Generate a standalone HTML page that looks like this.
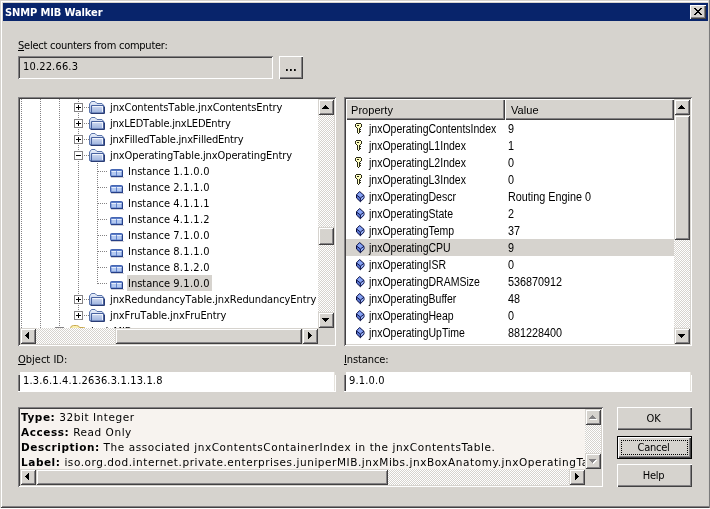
<!DOCTYPE html><html><head><meta charset="utf-8"><title>SNMP MIB Walker</title><style>
*{box-sizing:border-box;margin:0;padding:0}
html,body{width:710px;height:509px;overflow:hidden;background:#fff}
body{position:relative;font-family:"DejaVu Sans Condensed","Liberation Sans",sans-serif;font-size:11px;color:#000;line-height:13px}
.abs{position:absolute}
#win{will-change:transform;position:absolute;left:0;top:0;width:710px;height:508px;background:#d6d3ce;
 box-shadow:inset 1px 1px 0 #d6d3ce,inset -1px -1px 0 #424142,inset 2px 2px 0 #fff,inset -2px -2px 0 #848284}
#title{position:absolute;left:3px;top:3px;width:705px;height:18px;background:#08246b;color:#fff;font-weight:bold}
#title span{position:absolute;left:2px;top:3px;white-space:nowrap;letter-spacing:-0.1px}
.btn{position:absolute;background:#d6d3ce;
 box-shadow:inset 1px 1px 0 #fff,inset -1px -1px 0 #424142,inset -2px -2px 0 #848284;text-align:center}
.sunk{position:absolute;box-shadow:inset 1px 1px 0 #848284,inset -1px -1px 0 #fff,inset 2px 2px 0 #424142,inset -2px -2px 0 #d6d3ce}
.t{position:absolute;white-space:nowrap}
.tah{letter-spacing:-0.25px}
.track{position:absolute;background:conic-gradient(#fff 25%,#d6d3ce 0 50%,#fff 0 75%,#d6d3ce 0) 0 0/2px 2px}
.sb{position:absolute;background:#d6d3ce;box-shadow:inset 1px 1px 0 #d6d3ce,inset -1px -1px 0 #424142,inset 2px 2px 0 #fff,inset -2px -2px 0 #848284}
.sb svg{position:absolute;left:0;top:0}
.ms{font-family:"Liberation Sans",sans-serif;font-size:12.5px;line-height:14px;transform:scaleX(.84);transform-origin:0 0}
.hd{font-family:"Liberation Sans",sans-serif;font-size:11px;letter-spacing:.05px}
.tr{font-kerning:none;letter-spacing:-.1px}
.dg{letter-spacing:.16px}
.tr .dg{letter-spacing:.3px}
.ver{font-family:"DejaVu Sans","Liberation Sans",sans-serif;font-size:10.5px;letter-spacing:.55px}
.dotv{position:absolute;width:1px;background:repeating-linear-gradient(to bottom,#848284 0 1px,transparent 1px 2px)}
.doth{position:absolute;height:1px;background:repeating-linear-gradient(to right,#848284 0 1px,transparent 1px 2px)}
.box{position:absolute;width:9px;height:9px;border:1px solid #848284;background:#fff}
.box i{position:absolute;left:1px;top:3px;width:5px;height:1px;background:#000}
.box b{position:absolute;left:3px;top:1px;width:1px;height:5px;background:#000}
</style></head><body>
<svg width="0" height="0" style="position:absolute"><defs><linearGradient id="fg" x1="0" y1="0" x2="0" y2="1"><stop offset="0" stop-color="#d3ddf2"/><stop offset="1" stop-color="#9cb2de"/></linearGradient><linearGradient id="fb" x1="0" y1="0" x2="0" y2="1"><stop offset="0" stop-color="#eef3fb"/><stop offset="1" stop-color="#9cb3e2"/></linearGradient></defs></svg>
<div id="win">
<div class="abs" style="left:708px;top:0;width:1px;height:506px;background:#d2cfca"></div><div class="abs" style="left:709px;top:0;width:1px;height:508px;background:#7c7c7c"></div>
<div id="title"><span>SNMP MIB Walker</span></div>
<div class="btn" style="left:690px;top:5px;width:16px;height:14px"><svg class="abs" style="left:4px;top:3px" width="8" height="7" viewBox="0 0 8 7" shape-rendering="crispEdges"><path d="M0 0h2v1h1v1h2v-1h1v-1h2v1h-1v1h-1v1h-1v1h1v1h1v1h1v1h-2v-1h-1v-1h-2v1h-1v1h-2v-1h1v-1h1v-1h1v-1h-1v-1h-1v-1h-1z" fill="#000"/></svg></div>
<div class="t tah" style="left:18px;top:39px"><u>S</u>elect counters from computer:</div>
<div class="sunk" style="left:18px;top:56px;width:255px;height:23px"></div>
<div class="t dg" style="left:23px;top:60px">10.22.66.3</div>
<div class="btn" style="left:279px;top:56px;width:24px;height:23px"><span class="t" style="left:6px;top:5px;font-weight:bold;letter-spacing:.3px">...</span></div>
<div class="sunk" style="left:18px;top:97px;width:318px;height:249px;background:#fff"></div>
<div class="abs" style="left:20px;top:99px;width:298px;height:229px;overflow:hidden;background:#fff">
<div class="dotv" style="left:1px;top:0;height:230px"></div>
<div class="dotv" style="left:20px;top:0;height:230px"></div>
<div class="dotv" style="left:39px;top:0;height:230px"></div>
<div class="dotv" style="left:58px;top:0;height:216px"></div>
<div class="dotv" style="left:77px;top:64px;height:121px"></div>
<div class="doth" style="left:64px;top:8px;width:5px"></div>
<div class="box" style="left:54px;top:4px"><i></i><b></b></div>
<svg class="abs" style="left:69px;top:2px" width="16" height="13" viewBox="0 0 16 13"><path d="M.5 11.500v-8.500l2-2.500h3.500l2 2h5l2.500 3v6z" fill="url(#fb)" stroke="#5a74aa"/><path d="M2.500 4.500h12v7.500h-12z" fill="url(#fg)" stroke="#48629f"/><path d="M3.500 5.500h10v5.500" stroke="#fff" stroke-opacity=".75" fill="none"/><path d="M1.500 12.500h14v-6.500" stroke="#2a3c74" fill="none"/></svg>
<div class="t tr" style="left:90px;top:2px;letter-spacing:-0.1px">jnxContentsTable.jnxContentsEntry</div>
<div class="doth" style="left:64px;top:24px;width:5px"></div>
<div class="box" style="left:54px;top:20px"><i></i><b></b></div>
<svg class="abs" style="left:69px;top:18px" width="16" height="13" viewBox="0 0 16 13"><path d="M.5 11.500v-8.500l2-2.500h3.500l2 2h5l2.500 3v6z" fill="url(#fb)" stroke="#5a74aa"/><path d="M2.500 4.500h12v7.500h-12z" fill="url(#fg)" stroke="#48629f"/><path d="M3.500 5.500h10v5.500" stroke="#fff" stroke-opacity=".75" fill="none"/><path d="M1.500 12.500h14v-6.500" stroke="#2a3c74" fill="none"/></svg>
<div class="t tr" style="left:90px;top:18px;letter-spacing:-0.2px">jnxLEDTable.jnxLEDEntry</div>
<div class="doth" style="left:64px;top:40px;width:5px"></div>
<div class="box" style="left:54px;top:36px"><i></i><b></b></div>
<svg class="abs" style="left:69px;top:34px" width="16" height="13" viewBox="0 0 16 13"><path d="M.5 11.500v-8.500l2-2.500h3.500l2 2h5l2.500 3v6z" fill="url(#fb)" stroke="#5a74aa"/><path d="M2.500 4.500h12v7.500h-12z" fill="url(#fg)" stroke="#48629f"/><path d="M3.500 5.500h10v5.500" stroke="#fff" stroke-opacity=".75" fill="none"/><path d="M1.500 12.500h14v-6.500" stroke="#2a3c74" fill="none"/></svg>
<div class="t tr" style="left:90px;top:34px;letter-spacing:-0.2px">jnxFilledTable.jnxFilledEntry</div>
<div class="doth" style="left:64px;top:56px;width:5px"></div>
<div class="box" style="left:54px;top:52px"><i></i></div>
<svg class="abs" style="left:69px;top:50px" width="16" height="13" viewBox="0 0 16 13"><path d="M.5 11.500v-8.500l2-2.500h3.500l2 2h5l2.500 3v6z" fill="url(#fb)" stroke="#5a74aa"/><path d="M2.500 4.500h12v7.500h-12z" fill="url(#fg)" stroke="#48629f"/><path d="M3.500 5.500h10v5.500" stroke="#fff" stroke-opacity=".75" fill="none"/><path d="M1.500 12.500h14v-6.500" stroke="#2a3c74" fill="none"/></svg>
<div class="t tr" style="left:90px;top:50px;letter-spacing:-0.1px">jnxOperatingTable.jnxOperatingEntry</div>
<div class="doth" style="left:78px;top:72px;width:10px"></div>
<svg class="abs" style="left:90px;top:70px" width="14" height="9" viewBox="0 0 14 9"><rect x=".5" y=".5" width="12" height="7" rx="1" fill="#5a7cc8" stroke="#4666b2"/><path d="M1 7.500h12M12.500 1.500v6" stroke="#263f86" fill="none"/><rect x="1.500" y="2" width="4.600" height="4.500" fill="#b4c9f0"/><rect x="6.900" y="2" width="4.600" height="4.500" fill="#b4c9f0"/><rect x="1.500" y="2" width="10" height="1" fill="#e6eefc"/><rect x="6.100" y="2" width=".8" height="4.500" fill="#5d80cc"/><rect x="1" y="8" width="13" height="1" fill="#d0d0d8"/></svg>
<div class="t tr" style="left:108px;top:66px;letter-spacing:0">Instance <span class="dg">1.1.0.0</span></div>
<div class="doth" style="left:78px;top:88px;width:10px"></div>
<svg class="abs" style="left:90px;top:86px" width="14" height="9" viewBox="0 0 14 9"><rect x=".5" y=".5" width="12" height="7" rx="1" fill="#5a7cc8" stroke="#4666b2"/><path d="M1 7.500h12M12.500 1.500v6" stroke="#263f86" fill="none"/><rect x="1.500" y="2" width="4.600" height="4.500" fill="#b4c9f0"/><rect x="6.900" y="2" width="4.600" height="4.500" fill="#b4c9f0"/><rect x="1.500" y="2" width="10" height="1" fill="#e6eefc"/><rect x="6.100" y="2" width=".8" height="4.500" fill="#5d80cc"/><rect x="1" y="8" width="13" height="1" fill="#d0d0d8"/></svg>
<div class="t tr" style="left:108px;top:82px;letter-spacing:0">Instance <span class="dg">2.1.1.0</span></div>
<div class="doth" style="left:78px;top:104px;width:10px"></div>
<svg class="abs" style="left:90px;top:102px" width="14" height="9" viewBox="0 0 14 9"><rect x=".5" y=".5" width="12" height="7" rx="1" fill="#5a7cc8" stroke="#4666b2"/><path d="M1 7.500h12M12.500 1.500v6" stroke="#263f86" fill="none"/><rect x="1.500" y="2" width="4.600" height="4.500" fill="#b4c9f0"/><rect x="6.900" y="2" width="4.600" height="4.500" fill="#b4c9f0"/><rect x="1.500" y="2" width="10" height="1" fill="#e6eefc"/><rect x="6.100" y="2" width=".8" height="4.500" fill="#5d80cc"/><rect x="1" y="8" width="13" height="1" fill="#d0d0d8"/></svg>
<div class="t tr" style="left:108px;top:98px;letter-spacing:0">Instance <span class="dg">4.1.1.1</span></div>
<div class="doth" style="left:78px;top:120px;width:10px"></div>
<svg class="abs" style="left:90px;top:118px" width="14" height="9" viewBox="0 0 14 9"><rect x=".5" y=".5" width="12" height="7" rx="1" fill="#5a7cc8" stroke="#4666b2"/><path d="M1 7.500h12M12.500 1.500v6" stroke="#263f86" fill="none"/><rect x="1.500" y="2" width="4.600" height="4.500" fill="#b4c9f0"/><rect x="6.900" y="2" width="4.600" height="4.500" fill="#b4c9f0"/><rect x="1.500" y="2" width="10" height="1" fill="#e6eefc"/><rect x="6.100" y="2" width=".8" height="4.500" fill="#5d80cc"/><rect x="1" y="8" width="13" height="1" fill="#d0d0d8"/></svg>
<div class="t tr" style="left:108px;top:114px;letter-spacing:0">Instance <span class="dg">4.1.1.2</span></div>
<div class="doth" style="left:78px;top:136px;width:10px"></div>
<svg class="abs" style="left:90px;top:134px" width="14" height="9" viewBox="0 0 14 9"><rect x=".5" y=".5" width="12" height="7" rx="1" fill="#5a7cc8" stroke="#4666b2"/><path d="M1 7.500h12M12.500 1.500v6" stroke="#263f86" fill="none"/><rect x="1.500" y="2" width="4.600" height="4.500" fill="#b4c9f0"/><rect x="6.900" y="2" width="4.600" height="4.500" fill="#b4c9f0"/><rect x="1.500" y="2" width="10" height="1" fill="#e6eefc"/><rect x="6.100" y="2" width=".8" height="4.500" fill="#5d80cc"/><rect x="1" y="8" width="13" height="1" fill="#d0d0d8"/></svg>
<div class="t tr" style="left:108px;top:130px;letter-spacing:0">Instance <span class="dg">7.1.0.0</span></div>
<div class="doth" style="left:78px;top:152px;width:10px"></div>
<svg class="abs" style="left:90px;top:150px" width="14" height="9" viewBox="0 0 14 9"><rect x=".5" y=".5" width="12" height="7" rx="1" fill="#5a7cc8" stroke="#4666b2"/><path d="M1 7.500h12M12.500 1.500v6" stroke="#263f86" fill="none"/><rect x="1.500" y="2" width="4.600" height="4.500" fill="#b4c9f0"/><rect x="6.900" y="2" width="4.600" height="4.500" fill="#b4c9f0"/><rect x="1.500" y="2" width="10" height="1" fill="#e6eefc"/><rect x="6.100" y="2" width=".8" height="4.500" fill="#5d80cc"/><rect x="1" y="8" width="13" height="1" fill="#d0d0d8"/></svg>
<div class="t tr" style="left:108px;top:146px;letter-spacing:0">Instance <span class="dg">8.1.1.0</span></div>
<div class="doth" style="left:78px;top:168px;width:10px"></div>
<svg class="abs" style="left:90px;top:166px" width="14" height="9" viewBox="0 0 14 9"><rect x=".5" y=".5" width="12" height="7" rx="1" fill="#5a7cc8" stroke="#4666b2"/><path d="M1 7.500h12M12.500 1.500v6" stroke="#263f86" fill="none"/><rect x="1.500" y="2" width="4.600" height="4.500" fill="#b4c9f0"/><rect x="6.900" y="2" width="4.600" height="4.500" fill="#b4c9f0"/><rect x="1.500" y="2" width="10" height="1" fill="#e6eefc"/><rect x="6.100" y="2" width=".8" height="4.500" fill="#5d80cc"/><rect x="1" y="8" width="13" height="1" fill="#d0d0d8"/></svg>
<div class="t tr" style="left:108px;top:162px;letter-spacing:0">Instance <span class="dg">8.1.2.0</span></div>
<div class="doth" style="left:78px;top:184px;width:10px"></div>
<svg class="abs" style="left:90px;top:182px" width="14" height="9" viewBox="0 0 14 9"><rect x=".5" y=".5" width="12" height="7" rx="1" fill="#5a7cc8" stroke="#4666b2"/><path d="M1 7.500h12M12.500 1.500v6" stroke="#263f86" fill="none"/><rect x="1.500" y="2" width="4.600" height="4.500" fill="#b4c9f0"/><rect x="6.900" y="2" width="4.600" height="4.500" fill="#b4c9f0"/><rect x="1.500" y="2" width="10" height="1" fill="#e6eefc"/><rect x="6.100" y="2" width=".8" height="4.500" fill="#5d80cc"/><rect x="1" y="8" width="13" height="1" fill="#d0d0d8"/></svg>
<div class="abs" style="left:107px;top:176px;width:85px;height:16px;background:#d6d3ce"></div>
<div class="t tr" style="left:108px;top:178px;letter-spacing:0">Instance <span class="dg">9.1.0.0</span></div>
<div class="doth" style="left:64px;top:200px;width:5px"></div>
<div class="box" style="left:54px;top:196px"><i></i><b></b></div>
<svg class="abs" style="left:69px;top:194px" width="16" height="13" viewBox="0 0 16 13"><path d="M.5 11.500v-8.500l2-2.500h3.500l2 2h5l2.500 3v6z" fill="url(#fb)" stroke="#5a74aa"/><path d="M2.500 4.500h12v7.500h-12z" fill="url(#fg)" stroke="#48629f"/><path d="M3.500 5.500h10v5.500" stroke="#fff" stroke-opacity=".75" fill="none"/><path d="M1.500 12.500h14v-6.500" stroke="#2a3c74" fill="none"/></svg>
<div class="t tr" style="left:90px;top:194px;letter-spacing:-0.1px">jnxRedundancyTable.jnxRedundancyEntry</div>
<div class="doth" style="left:64px;top:216px;width:5px"></div>
<div class="box" style="left:54px;top:212px"><i></i><b></b></div>
<svg class="abs" style="left:69px;top:210px" width="16" height="13" viewBox="0 0 16 13"><path d="M.5 11.500v-8.500l2-2.500h3.500l2 2h5l2.500 3v6z" fill="url(#fb)" stroke="#5a74aa"/><path d="M2.500 4.500h12v7.500h-12z" fill="url(#fg)" stroke="#48629f"/><path d="M3.500 5.500h10v5.500" stroke="#fff" stroke-opacity=".75" fill="none"/><path d="M1.500 12.500h14v-6.500" stroke="#2a3c74" fill="none"/></svg>
<div class="t tr" style="left:90px;top:210px;letter-spacing:-0.1px">jnxFruTable.jnxFruEntry</div>
<div class="abs" style="left:35px;top:228px;width:9px;height:9px;border:1px solid #848284;background:#fff"></div>
<div class="doth" style="left:45px;top:232px;width:5px"></div>
<svg class="abs" style="left:50px;top:226px" width="16" height="13" viewBox="0 0 16 13"><path d="M.5 11.500v-8q0-3 3-3h3q2.500 0 3 2h4q2 0 2 2v7z" fill="#fbf0b0" stroke="#c8a850"/><path d="M1.500 4.500h13v7.500h-13z" fill="#f5dc80" stroke="#b89030"/></svg>
<div class="t tr" style="left:71px;top:226px">jnxJsMIBs</div>
</div>
<div class="track" style="left:318px;top:99px;width:16px;height:229px"></div>
<div class="sb" style="left:318px;top:99px;width:16px;height:16px"><svg width="16" height="16" viewBox="0 0 16 16" shape-rendering="crispEdges"><path d="M7 6h1v1h1v1h1v1h1v1H4v-1h1v-1h1v-1h1z" fill="#000"/></svg></div>
<div class="sb" style="left:318px;top:227px;width:16px;height:18px"></div>
<div class="sb" style="left:318px;top:312px;width:16px;height:16px"><svg width="16" height="16" viewBox="0 0 16 16" shape-rendering="crispEdges"><path d="M4 6h7v1h-1v1h-1v1h-1v1h-1v-1h-1v-1h-1v-1h-1z" fill="#000"/></svg></div>
<div class="track" style="left:20px;top:328px;width:298px;height:16px"></div>
<div class="sb" style="left:20px;top:328px;width:16px;height:16px"><svg width="16" height="16" viewBox="0 0 16 16" shape-rendering="crispEdges"><path d="M9 4v7h-1v-1h-1v-1h-1v-1h-1v-1h1v-1h1v-1h1v-1z" fill="#000"/></svg></div>
<div class="sb" style="left:115px;top:328px;width:187px;height:16px"></div>
<div class="sb" style="left:302px;top:328px;width:16px;height:16px"><svg width="16" height="16" viewBox="0 0 16 16" shape-rendering="crispEdges"><path d="M6 4v7h1v-1h1v-1h1v-1h1v-1h-1v-1h-1v-1h-1v-1z" fill="#000"/></svg></div>
<div class="abs" style="left:318px;top:328px;width:16px;height:16px;background:#d6d3ce"></div>
<div class="sunk" style="left:344px;top:97px;width:348px;height:249px;background:#fff"></div>
<div class="abs" style="left:346px;top:99px;width:328px;height:245px;overflow:hidden;background:#fff">
<div class="btn" style="left:0;top:0;width:159px;height:21px"><span class="t hd" style="left:5px;top:5px">Property</span></div>
<div class="btn" style="left:159px;top:0;width:169px;height:21px"><span class="t hd" style="left:6px;top:5px">Value</span></div>
<svg class="abs" style="left:9px;top:24px" width="7" height="11" viewBox="0 0 7 11" shape-rendering="crispEdges"><path d="M1 0h5v1h-5zM0 1h1v1h-1zM6 1h1v1h-1zM0 2h1v1h-1zM2 2h2v1h-2zM6 2h1v1h-1zM0 3h1v1h-1zM6 3h1v1h-1zM1 4h1v1h-1zM5 4h1v1h-1zM2 5h1v1h-1zM4 5h1v1h-1zM2 6h1v1h-1zM4 6h2v1h-2zM2 7h1v1h-1zM4 7h1v1h-1zM2 8h1v1h-1zM4 8h2v1h-2zM2 9h1v1h-1zM4 9h1v1h-1zM3 10h1v1h-1z" fill="#2a2a18"/><path d="M1 1h5v1h-5zM1 2h1v1h-1zM4 2h2v1h-2zM1 3h5v1h-5zM2 4h3v1h-3zM3 5h1v1h-1zM3 6h1v1h-1zM3 7h1v1h-1zM3 8h1v1h-1zM3 9h1v1h-1z" fill="#ffffc0"/></svg>
<div class="t ms" style="left:22.5px;top:23px">jnxOperatingContentsIndex</div>
<div class="t ms" style="left:162px;top:23px;transform:scaleX(.865)">9</div>
<svg class="abs" style="left:9px;top:41px" width="7" height="11" viewBox="0 0 7 11" shape-rendering="crispEdges"><path d="M1 0h5v1h-5zM0 1h1v1h-1zM6 1h1v1h-1zM0 2h1v1h-1zM2 2h2v1h-2zM6 2h1v1h-1zM0 3h1v1h-1zM6 3h1v1h-1zM1 4h1v1h-1zM5 4h1v1h-1zM2 5h1v1h-1zM4 5h1v1h-1zM2 6h1v1h-1zM4 6h2v1h-2zM2 7h1v1h-1zM4 7h1v1h-1zM2 8h1v1h-1zM4 8h2v1h-2zM2 9h1v1h-1zM4 9h1v1h-1zM3 10h1v1h-1z" fill="#2a2a18"/><path d="M1 1h5v1h-5zM1 2h1v1h-1zM4 2h2v1h-2zM1 3h5v1h-5zM2 4h3v1h-3zM3 5h1v1h-1zM3 6h1v1h-1zM3 7h1v1h-1zM3 8h1v1h-1zM3 9h1v1h-1z" fill="#ffffc0"/></svg>
<div class="t ms" style="left:22.5px;top:40px">jnxOperatingL1Index</div>
<div class="t ms" style="left:162px;top:40px;transform:scaleX(.865)">1</div>
<svg class="abs" style="left:9px;top:58px" width="7" height="11" viewBox="0 0 7 11" shape-rendering="crispEdges"><path d="M1 0h5v1h-5zM0 1h1v1h-1zM6 1h1v1h-1zM0 2h1v1h-1zM2 2h2v1h-2zM6 2h1v1h-1zM0 3h1v1h-1zM6 3h1v1h-1zM1 4h1v1h-1zM5 4h1v1h-1zM2 5h1v1h-1zM4 5h1v1h-1zM2 6h1v1h-1zM4 6h2v1h-2zM2 7h1v1h-1zM4 7h1v1h-1zM2 8h1v1h-1zM4 8h2v1h-2zM2 9h1v1h-1zM4 9h1v1h-1zM3 10h1v1h-1z" fill="#2a2a18"/><path d="M1 1h5v1h-5zM1 2h1v1h-1zM4 2h2v1h-2zM1 3h5v1h-5zM2 4h3v1h-3zM3 5h1v1h-1zM3 6h1v1h-1zM3 7h1v1h-1zM3 8h1v1h-1zM3 9h1v1h-1z" fill="#ffffc0"/></svg>
<div class="t ms" style="left:22.5px;top:57px">jnxOperatingL2Index</div>
<div class="t ms" style="left:162px;top:57px;transform:scaleX(.865)">0</div>
<svg class="abs" style="left:9px;top:75px" width="7" height="11" viewBox="0 0 7 11" shape-rendering="crispEdges"><path d="M1 0h5v1h-5zM0 1h1v1h-1zM6 1h1v1h-1zM0 2h1v1h-1zM2 2h2v1h-2zM6 2h1v1h-1zM0 3h1v1h-1zM6 3h1v1h-1zM1 4h1v1h-1zM5 4h1v1h-1zM2 5h1v1h-1zM4 5h1v1h-1zM2 6h1v1h-1zM4 6h2v1h-2zM2 7h1v1h-1zM4 7h1v1h-1zM2 8h1v1h-1zM4 8h2v1h-2zM2 9h1v1h-1zM4 9h1v1h-1zM3 10h1v1h-1z" fill="#2a2a18"/><path d="M1 1h5v1h-5zM1 2h1v1h-1zM4 2h2v1h-2zM1 3h5v1h-5zM2 4h3v1h-3zM3 5h1v1h-1zM3 6h1v1h-1zM3 7h1v1h-1zM3 8h1v1h-1zM3 9h1v1h-1z" fill="#ffffc0"/></svg>
<div class="t ms" style="left:22.5px;top:74px">jnxOperatingL3Index</div>
<div class="t ms" style="left:162px;top:74px;transform:scaleX(.865)">0</div>
<svg class="abs" style="left:10px;top:92px" width="9" height="12" viewBox="0 0 9 12"><path d="M3.600.500l4.400 3.900v2.800l-3.600 3.500-3.900-3.700v-3.200z" fill="#5876d6" stroke="#080c3c" stroke-width="1"/><path d="M3.600 1.200l3.700 3.300-2.900 2.400-3.400-2.900z" fill="#86a2f4"/><path d="M4.400 7l3.100-2.300v2.300l-3.100 3.100z" fill="#9cb4f6"/><path d="M.6 4l3.800 3 3.500-2.600M4.400 7v3.600" fill="none" stroke="#080c3c" stroke-width=".9"/></svg>
<div class="t ms" style="left:22.5px;top:91px">jnxOperatingDescr</div>
<div class="t ms" style="left:162px;top:91px;transform:scaleX(.865)">Routing Engine 0</div>
<svg class="abs" style="left:10px;top:109px" width="9" height="12" viewBox="0 0 9 12"><path d="M3.600.500l4.400 3.900v2.800l-3.600 3.500-3.900-3.700v-3.200z" fill="#5876d6" stroke="#080c3c" stroke-width="1"/><path d="M3.600 1.200l3.700 3.300-2.900 2.400-3.400-2.900z" fill="#86a2f4"/><path d="M4.400 7l3.100-2.300v2.300l-3.100 3.100z" fill="#9cb4f6"/><path d="M.6 4l3.800 3 3.500-2.600M4.400 7v3.600" fill="none" stroke="#080c3c" stroke-width=".9"/></svg>
<div class="t ms" style="left:22.5px;top:108px">jnxOperatingState</div>
<div class="t ms" style="left:162px;top:108px;transform:scaleX(.865)">2</div>
<svg class="abs" style="left:10px;top:126px" width="9" height="12" viewBox="0 0 9 12"><path d="M3.600.500l4.400 3.900v2.800l-3.600 3.500-3.900-3.700v-3.200z" fill="#5876d6" stroke="#080c3c" stroke-width="1"/><path d="M3.600 1.200l3.700 3.300-2.900 2.400-3.400-2.900z" fill="#86a2f4"/><path d="M4.400 7l3.100-2.300v2.300l-3.100 3.100z" fill="#9cb4f6"/><path d="M.6 4l3.800 3 3.500-2.600M4.400 7v3.600" fill="none" stroke="#080c3c" stroke-width=".9"/></svg>
<div class="t ms" style="left:22.5px;top:125px">jnxOperatingTemp</div>
<div class="t ms" style="left:162px;top:125px;transform:scaleX(.865)">37</div>
<div class="abs" style="left:0;top:140px;width:328px;height:17px;background:#d6d3ce"></div>
<svg class="abs" style="left:10px;top:143px" width="9" height="12" viewBox="0 0 9 12"><path d="M3.600.500l4.400 3.900v2.800l-3.600 3.500-3.900-3.700v-3.200z" fill="#5876d6" stroke="#080c3c" stroke-width="1"/><path d="M3.600 1.200l3.700 3.300-2.900 2.400-3.400-2.900z" fill="#86a2f4"/><path d="M4.400 7l3.100-2.300v2.300l-3.100 3.100z" fill="#9cb4f6"/><path d="M.6 4l3.800 3 3.500-2.600M4.400 7v3.600" fill="none" stroke="#080c3c" stroke-width=".9"/></svg>
<div class="t ms" style="left:22.5px;top:142px">jnxOperatingCPU</div>
<div class="t ms" style="left:162px;top:142px;transform:scaleX(.865)">9</div>
<svg class="abs" style="left:10px;top:160px" width="9" height="12" viewBox="0 0 9 12"><path d="M3.600.500l4.400 3.900v2.800l-3.600 3.500-3.900-3.700v-3.200z" fill="#5876d6" stroke="#080c3c" stroke-width="1"/><path d="M3.600 1.200l3.700 3.300-2.900 2.400-3.400-2.900z" fill="#86a2f4"/><path d="M4.400 7l3.100-2.300v2.300l-3.100 3.100z" fill="#9cb4f6"/><path d="M.6 4l3.800 3 3.500-2.600M4.400 7v3.600" fill="none" stroke="#080c3c" stroke-width=".9"/></svg>
<div class="t ms" style="left:22.5px;top:159px">jnxOperatingISR</div>
<div class="t ms" style="left:162px;top:159px;transform:scaleX(.865)">0</div>
<svg class="abs" style="left:10px;top:177px" width="9" height="12" viewBox="0 0 9 12"><path d="M3.600.500l4.400 3.900v2.800l-3.600 3.500-3.900-3.700v-3.200z" fill="#5876d6" stroke="#080c3c" stroke-width="1"/><path d="M3.600 1.200l3.700 3.300-2.900 2.400-3.400-2.900z" fill="#86a2f4"/><path d="M4.400 7l3.100-2.300v2.300l-3.100 3.100z" fill="#9cb4f6"/><path d="M.6 4l3.800 3 3.500-2.600M4.400 7v3.600" fill="none" stroke="#080c3c" stroke-width=".9"/></svg>
<div class="t ms" style="left:22.5px;top:176px">jnxOperatingDRAMSize</div>
<div class="t ms" style="left:162px;top:176px;transform:scaleX(.865)">536870912</div>
<svg class="abs" style="left:10px;top:194px" width="9" height="12" viewBox="0 0 9 12"><path d="M3.600.500l4.400 3.900v2.800l-3.600 3.500-3.900-3.700v-3.200z" fill="#5876d6" stroke="#080c3c" stroke-width="1"/><path d="M3.600 1.200l3.700 3.300-2.900 2.400-3.400-2.900z" fill="#86a2f4"/><path d="M4.400 7l3.100-2.300v2.300l-3.100 3.100z" fill="#9cb4f6"/><path d="M.6 4l3.800 3 3.500-2.600M4.400 7v3.600" fill="none" stroke="#080c3c" stroke-width=".9"/></svg>
<div class="t ms" style="left:22.5px;top:193px">jnxOperatingBuffer</div>
<div class="t ms" style="left:162px;top:193px;transform:scaleX(.865)">48</div>
<svg class="abs" style="left:10px;top:211px" width="9" height="12" viewBox="0 0 9 12"><path d="M3.600.500l4.400 3.900v2.800l-3.600 3.500-3.900-3.700v-3.200z" fill="#5876d6" stroke="#080c3c" stroke-width="1"/><path d="M3.600 1.200l3.700 3.300-2.900 2.400-3.400-2.900z" fill="#86a2f4"/><path d="M4.400 7l3.100-2.300v2.300l-3.100 3.100z" fill="#9cb4f6"/><path d="M.6 4l3.800 3 3.500-2.600M4.400 7v3.600" fill="none" stroke="#080c3c" stroke-width=".9"/></svg>
<div class="t ms" style="left:22.5px;top:210px">jnxOperatingHeap</div>
<div class="t ms" style="left:162px;top:210px;transform:scaleX(.865)">0</div>
<svg class="abs" style="left:10px;top:228px" width="9" height="12" viewBox="0 0 9 12"><path d="M3.600.500l4.400 3.900v2.800l-3.600 3.500-3.900-3.700v-3.200z" fill="#5876d6" stroke="#080c3c" stroke-width="1"/><path d="M3.600 1.200l3.700 3.300-2.900 2.400-3.400-2.900z" fill="#86a2f4"/><path d="M4.400 7l3.100-2.300v2.300l-3.100 3.100z" fill="#9cb4f6"/><path d="M.6 4l3.800 3 3.500-2.600M4.400 7v3.600" fill="none" stroke="#080c3c" stroke-width=".9"/></svg>
<div class="t ms" style="left:22.5px;top:227px">jnxOperatingUpTime</div>
<div class="t ms" style="left:162px;top:227px;transform:scaleX(.865)">881228400</div>
</div>
<div class="track" style="left:674px;top:99px;width:16px;height:245px"></div>
<div class="sb" style="left:674px;top:99px;width:16px;height:16px"><svg width="16" height="16" viewBox="0 0 16 16" shape-rendering="crispEdges"><path d="M7 6h1v1h1v1h1v1h1v1H4v-1h1v-1h1v-1h1z" fill="#000"/></svg></div>
<div class="sb" style="left:674px;top:115px;width:16px;height:125px"></div>
<div class="sb" style="left:674px;top:328px;width:16px;height:16px"><svg width="16" height="16" viewBox="0 0 16 16" shape-rendering="crispEdges"><path d="M4 6h7v1h-1v1h-1v1h-1v1h-1v-1h-1v-1h-1v-1h-1z" fill="#000"/></svg></div>
<div class="t" style="left:18px;top:353px"><u>O</u>bject ID:</div>
<div class="t" style="left:344px;top:353px;letter-spacing:-.1px"><u>I</u>nstance:</div>
<div class="abs" style="left:20px;top:372px;width:314px;height:19px;background:#fff"></div>
<div class="abs" style="left:18px;top:391px;width:318px;height:1px;background:#fff"></div>
<div class="abs" style="left:334px;top:372px;width:1px;height:19px;background:#e6e3dd"></div>
<div class="abs" style="left:335px;top:375px;width:1px;height:17px;background:#fff"></div>
<div class="abs" style="left:18px;top:375px;width:2px;height:16px;background:linear-gradient(to right,#848284 50%,#424142 50%)"></div>
<div class="abs" style="left:346px;top:372px;width:344px;height:19px;background:#fff"></div>
<div class="abs" style="left:344px;top:391px;width:348px;height:1px;background:#fff"></div>
<div class="abs" style="left:690px;top:372px;width:1px;height:19px;background:#e6e3dd"></div>
<div class="abs" style="left:691px;top:375px;width:1px;height:17px;background:#fff"></div>
<div class="abs" style="left:344px;top:375px;width:2px;height:16px;background:linear-gradient(to right,#848284 50%,#424142 50%)"></div>
<div class="t dg" style="left:23px;top:374px">1.3.6.1.4.1.2636.3.1.13.1.8</div>
<div class="t dg" style="left:349px;top:374px">9.1.0.0</div>
<div class="sunk" style="left:18px;top:407px;width:585px;height:80px;background:#f7f3ef"></div>
<div class="abs ver" style="left:20px;top:409px;width:565px;height:60px;overflow:hidden;line-height:15px;white-space:nowrap;padding:1px 0 0 1px">
<div><b>Type:</b> 32bit Integer</div><div><b>Access:</b> Read Only</div><div><b>Description:</b> The associated jnxContentsContainerIndex in the jnxContentsTable.</div><div><b>Label:</b> iso.org.dod.internet.private.enterprises.juniperMIB.jnxMibs.jnxBoxAnatomy.jnxOperatingTable.jnxOperatingEntry.jnxOperatingContentsIndex</div>
</div>
<div class="track" style="left:585px;top:409px;width:16px;height:60px"></div>
<div class="sb" style="left:585px;top:409px;width:16px;height:16px"><svg width="16" height="16" viewBox="0 0 16 16" shape-rendering="crispEdges"><g transform="translate(1 1)"><path d="M7 6h1v1h1v1h1v1h1v1H4v-1h1v-1h1v-1h1z" fill="#fff"/></g><path d="M7 6h1v1h1v1h1v1h1v1H4v-1h1v-1h1v-1h1z" fill="#848284"/></svg></div>
<div class="sb" style="left:585px;top:453px;width:16px;height:16px"><svg width="16" height="16" viewBox="0 0 16 16" shape-rendering="crispEdges"><g transform="translate(1 1)"><path d="M4 6h7v1h-1v1h-1v1h-1v1h-1v-1h-1v-1h-1v-1h-1z" fill="#fff"/></g><path d="M4 6h7v1h-1v1h-1v1h-1v1h-1v-1h-1v-1h-1v-1h-1z" fill="#848284"/></svg></div>
<div class="track" style="left:20px;top:469px;width:565px;height:16px"></div>
<div class="sb" style="left:20px;top:469px;width:16px;height:16px"><svg width="16" height="16" viewBox="0 0 16 16" shape-rendering="crispEdges"><path d="M9 4v7h-1v-1h-1v-1h-1v-1h-1v-1h1v-1h1v-1h1v-1z" fill="#000"/></svg></div>
<div class="sb" style="left:36px;top:469px;width:352px;height:16px"></div>
<div class="sb" style="left:569px;top:469px;width:16px;height:16px"><svg width="16" height="16" viewBox="0 0 16 16" shape-rendering="crispEdges"><path d="M6 4v7h1v-1h1v-1h1v-1h1v-1h-1v-1h-1v-1h-1v-1z" fill="#000"/></svg></div>
<div class="abs" style="left:585px;top:469px;width:16px;height:16px;background:#d6d3ce"></div>
<div class="btn" style="left:617px;top:407px;width:75px;height:23px"><span class="t tah" style="left:-1px;width:75px;top:5px">OK</span></div>
<div class="abs" style="left:617px;top:436px;width:75px;height:23px;background:#000"></div>
<div class="btn" style="left:618px;top:437px;width:73px;height:21px"><span class="t tah" style="left:-1px;width:73px;top:4px">Cancel</span><div class="abs" style="left:3px;top:3px;width:67px;height:15px;border:1px dotted #000"></div></div>
<div class="btn" style="left:617px;top:464px;width:75px;height:23px"><span class="t tah" style="left:-1px;width:75px;top:5px">Help</span></div>
</div></body></html>
